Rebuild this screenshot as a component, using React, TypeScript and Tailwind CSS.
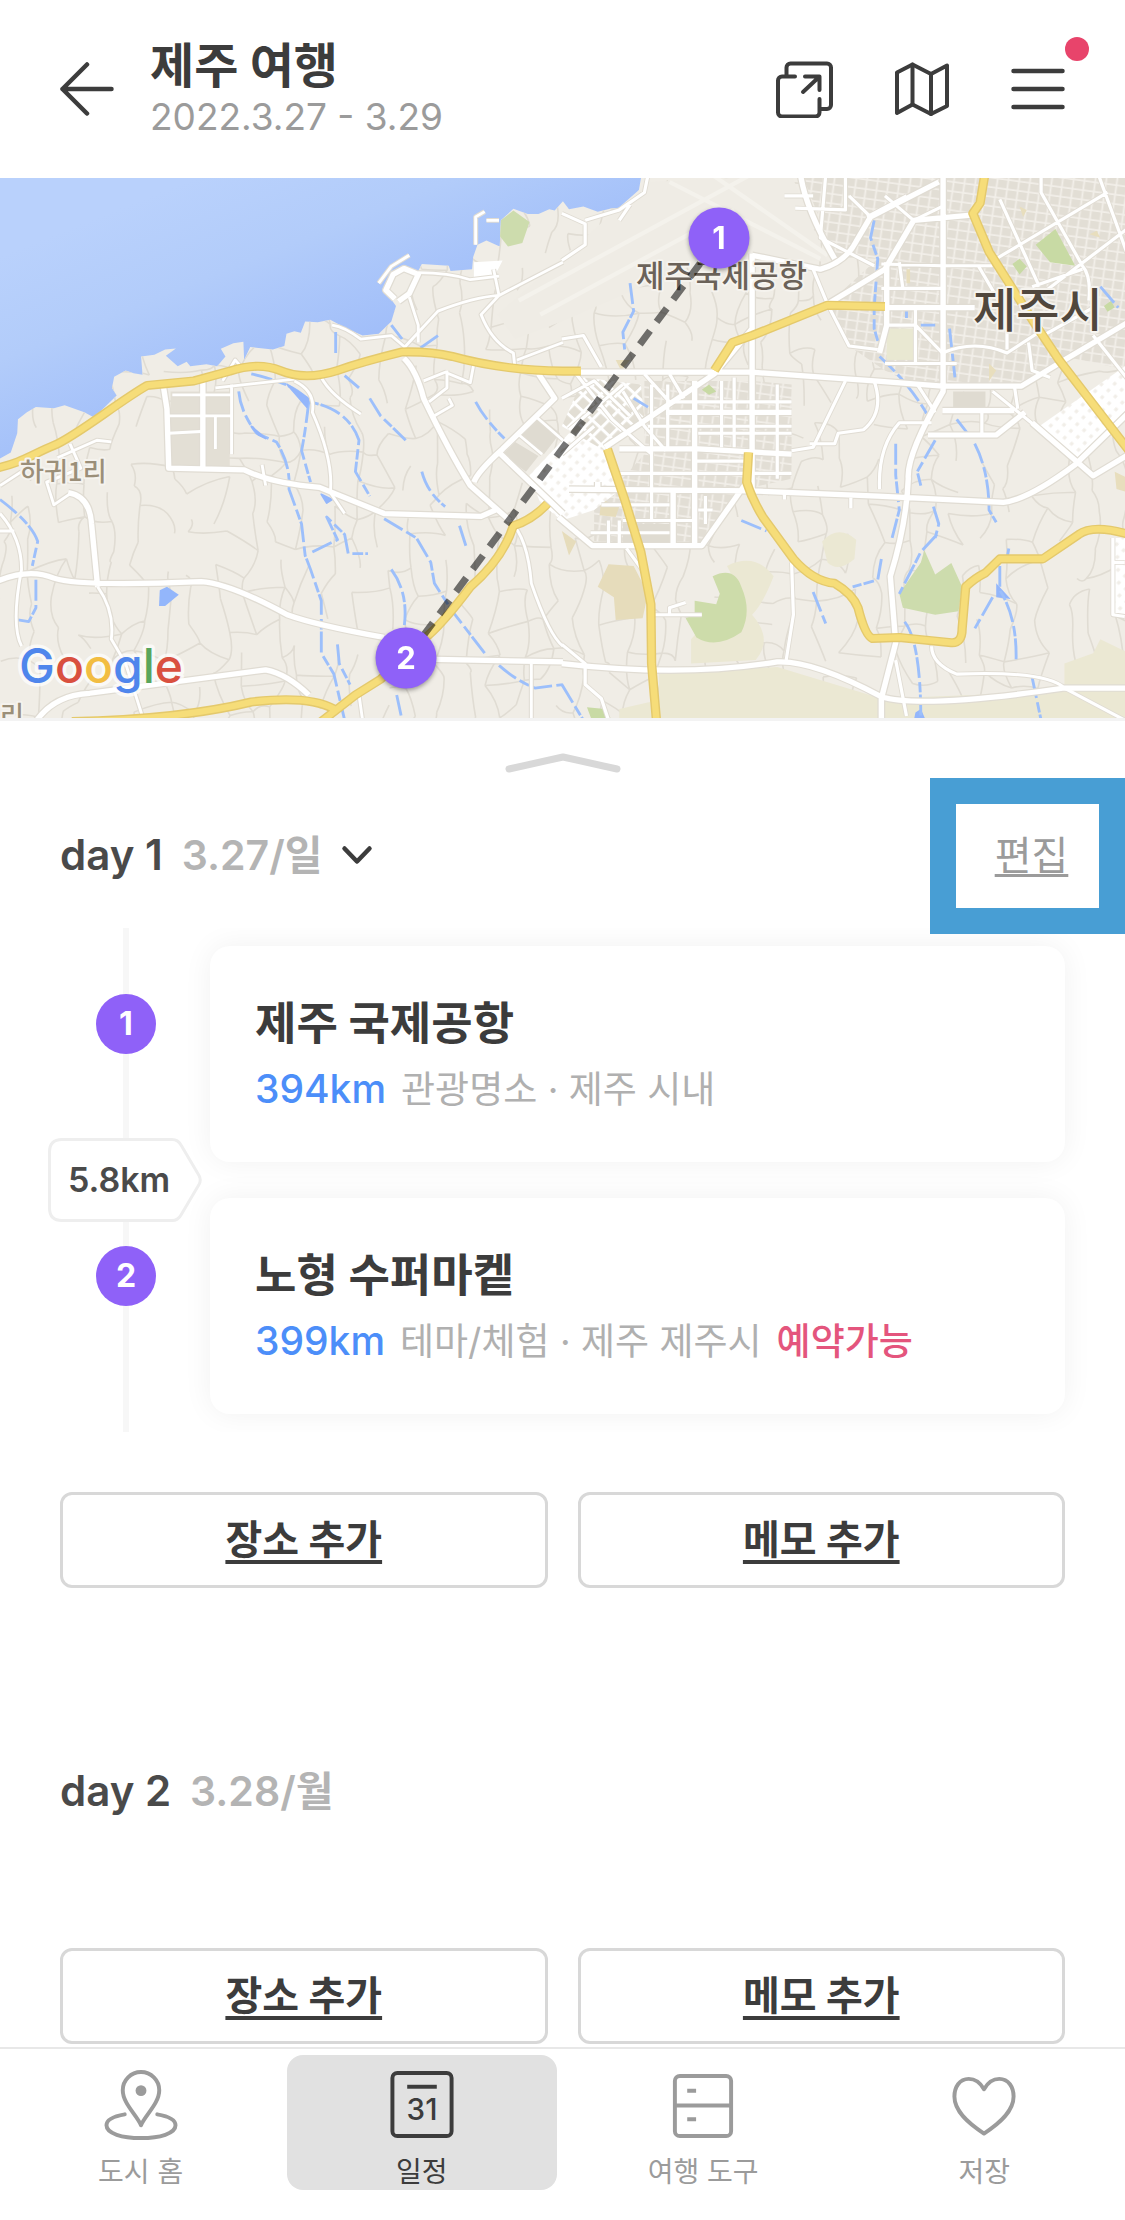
import type { ReactNode } from 'react';

/* ---------- Map drawing ---------- */

// Small deterministic generator so the country lanes are the same on every render.
function createRandom(seed: number) {
  let s = seed;
  return () => {
    s = (s * 16807) % 2147483647;
    return s / 2147483647;
  };
}

// Builds the mesh of thin lanes that covers the land.
function buildLanes() {
  const rnd = createRandom(77);
  const cols = 44;
  const rows = 22;
  const pts: { x: number; y: number }[][] = [];
  for (let r = 0; r < rows; r++) {
    const row: { x: number; y: number }[] = [];
    for (let c = 0; c < cols; c++) {
      row.push({ x: c * 76 - 20 + rnd() * 56, y: r * 80 - 20 + rnd() * 60 });
    }
    pts.push(row);
  }
  const bend = (a: { x: number; y: number }, b: { x: number; y: number }) => {
    const mx = (a.x + b.x) / 2 + (rnd() - 0.5) * 36;
    const my = (a.y + b.y) / 2 + (rnd() - 0.5) * 36;
    return `M${a.x.toFixed(0)} ${a.y.toFixed(0)}Q${mx.toFixed(0)} ${my.toFixed(0)} ${b.x.toFixed(0)} ${b.y.toFixed(0)}`;
  };
  let d = '';
  for (let r = 0; r < rows; r++) {
    for (let c = 0; c < cols; c++) {
      if (c + 1 < cols && rnd() < 0.38) d += bend(pts[r][c], pts[r][c + 1]);
      if (r + 1 < rows && rnd() < 0.74) d += bend(pts[r][c], pts[r + 1][c]);
    }
  }
  return d;
}

const LANES = buildLanes();

const LAND =
  'M0 812L30 795 48 740 50 700 75 680 100 665 150 668 180 660 235 680 262 695 295 662 325 632 312 610 318 578 350 560 372 568 397 572 393 520 430 515 460 500 490 497 462 518 495 548 520 535 530 548 575 542 605 548 628 520 615 498 650 482 678 478 680 530 697 493 760 500 792 490 798 455 820 448 838 452 850 420 885 422 920 415 965 440 1010 460 1055 455 1090 420 1103 375 1075 335 1090 285 1120 262 1165 275 1175 255 1250 260 1255 275 1315 270 1318 235 1330 200 1355 188 1392 205 1395 130 1430 97 1470 112 1500 112 1530 98 1545 102 1568 75 1585 98 1625 90 1665 105 1705 95 1740 95 1775 70 1787 0H3200V1640H0Z';

const YELLOW_LEFT =
  'M-10 840C60 825 90 800 150 775S330 650 410 603L540 590 640 562Q720 535 780 560Q850 590 940 560Q1010 535 1120 507Q1200 505 1260 520Q1400 560 1568 562H1618M1525 942Q1480 990 1430 1005Q1400 1100 1310 1180Q1230 1290 1180 1330L1060 1445 990 1490 890 1570M930 1530Q860 1490 700 1510Q500 1560 200 1566';
const YELLOW_RIGHT =
  'M425 560L475 480 530 460 740 373 900 377M1178 0L1165 80 1145 110 1190 220 1320 430 1385 530 1460 630 1580 790M127 785L175 930 220 1080 248 1230 250 1400 265 1580M520 795L515 880Q530 930 560 980L645 1100Q700 1165 760 1170Q810 1200 825 1240Q845 1320 865 1328L940 1325 1085 1340Q1115 1342 1115 1300L1125 1180Q1150 1155 1180 1140L1220 1100 1340 1100 1440 1030Q1480 1000 1580 1030';

const WHITE_LEFT =
  'M455 605L465 670 470 840 680 845Q760 885 890 895L1070 970 1340 978 1380 960M565 590V840M-10 1165Q80 1125 150 1155Q220 1180 560 1165Q640 1170 800 1260Q880 1290 1070 1325M190 910Q250 920 255 1000L272 1180M100 1566Q150 1490 250 1485L740 1418Q800 1430 860 1490M1215 1388L1568 1395M1125 525Q1160 560 1180 640Q1250 790 1310 890L1420 990M1320 880Q1330 850 1400 785L1545 640 1500 570M1390 795L1568 970M1100 355L1075 330 1095 285 1125 268 1165 285 1140 340 1110 362';
const WHITE_RIGHT =
  'M40 565L530 565 870 590 1060 605 1280 605 1400 530 1580 420M530 225V900M120 780L425 570 530 440M20 900L530 905 880 920 1230 938Q1300 930 1430 830L1580 680M1310 710L1480 862 1580 800M-10 980L85 1062 390 1062 515 880M1062 0V620Q960 800 965 870Q960 1000 915 1150L930 1340 890 1500V1570M665 0Q680 100 760 240M530 230L720 270Q790 250 820 190L860 120 1050 20M740 370L900 270 980 130 1140 115M905 250V430L885 510M900 380H1150M0 1400Q340 1440 600 1395Q700 1390 890 1495Q1000 1530 1400 1470L1580 1470M290 680H640M160 785H380L640 800M100 900L100 880M1060 675H1260M1020 745H1210L1290 680M310 900V1060M370 590V1060';

const MINOR_LEFT =
  'M645 600V800M470 690H645M470 740L560 735M480 630H645M600 690V785M195 770L225 840 130 880 150 945 200 910M160 810L270 760 310 765M272 1180Q320 1250 310 1330L350 1400 400 1562M820 590Q880 620 870 680Q930 820 920 910L960 970M895 580Q920 630 1005 685M0 970Q60 1040 60 1130Q30 1290 60 1350M1480 1400V1562M1000 1490L1010 1562M1420 990Q1470 1040 1480 1170Q1530 1320 1568 1350M1130 490L1220 390Q1320 350 1390 345L1568 250M1375 270L1390 345 1340 400Q1370 480 1430 510L1435 560M1440 530L1568 480M925 430Q960 435 1005 470L1090 460 1130 495M1140 350L1165 430V480M1165 280Q1250 280 1310 300L1390 290M1180 590L1240 565 1310 595 1320 540M1195 650L1245 610V560M1210 690L1260 660 1250 640M620 590L655 530 680 560M600 610L820 585M730 830L740 890M0 890L60 850M1325 200V120L1350 105M1355 130H1390M1055 310L1090 262 1140 230M1440 740L1510 800M1490 690L1568 760M0 1020H40';
const MINOR_RIGHT =
  'M250 600V990M295 600V780M445 590V780M480 580V780M600 600V870M170 990H370M240 720H640M300 650H640M380 740H640M150 855H640M110 945H300M130 990V1060M160 990V1060M80 1025H300M380 960H420M400 920V1000M370 820H520M0 470L60 460 110 550M0 640L90 590 190 690M40 570L140 700 250 800M20 730L170 600M0 800L90 720M170 620L230 720 290 790M230 570L300 650M300 570L340 640M700 270L740 370 800 490 880 500M900 430H985L1060 510M985 380V540M900 540H1100M1060 510Q1150 470 1240 510L1330 450M1240 500V400L1160 260M1300 480L1310 560 1360 580M1060 260H1200M1060 260L890 255M890 325H1060M940 250L950 325M1310 320L1450 270M1210 240L1520 50M1335 0V50L1450 260Q1475 290 1468 360M1495 0L1580 240M1220 70L1330 320M1350 330L1580 150M1340 460L1480 380M1480 460L1580 590M700 60H620M735 0L720 180 870 260M790 0V100L650 95M860 120L800 60M900 60L980 130 1060 90M850 120L960 60M790 590L700 780 640 790M870 590Q900 680 840 730L770 740 760 770 690 770M990 600L1040 680M1200 620L1320 720M1260 600L1270 670M1170 680V745M1030 710H940Q880 780 885 900M640 1110L645 1260 625 1390M620 905V930M805 925V955M180 1070L230 1140M250 1260H390M300 1260V1240L345 1225M0 1345L65 1400V1460L110 1500 130 1562M930 1390L960 1550M1030 1350Q1030 1400 1100 1430Q1350 1420 1400 1470L1568 1562M1535 1040V1260L1568 1265M1535 1110H1568M0 245L65 200V140L0 110M65 130L160 100 230 50 240 0M160 130L190 85';

const RIVER_LEFT =
  'M665 620Q670 680 715 740L770 765Q810 830 805 900L840 1000 850 1090 865 1130 895 1220V1370L930 1430 960 1562M860 650Q850 740 840 790L865 880M700 570Q830 600 860 650Q970 670 1000 760L990 850 1030 920M1070 985L1160 1040 1200 1110 1210 1170 1260 1250 1350 1370M1090 1130Q1140 1200 1125 1300M870 1080L940 1045 910 980 960 1030 970 1085H1025M940 1345L945 1400 975 1460M0 930Q90 1000 105 1050L90 1120M100 1160V1240L80 1280 50 1275M1175 850Q1190 910 1240 950M1325 650Q1350 700 1405 755M1280 1005L1300 1070M935 450V520M1090 430L1120 470M1220 460L1165 500M1390 1405Q1440 1450 1490 1470L1568 1460M960 575L1000 610M1030 640L1060 690 1130 760M1105 1490L1120 1562';
const RIVER_RIGHT =
  'M190 310L200 390 170 450 175 500M870 130L860 180 880 240 870 380V440L880 475M885 520Q970 600 1020 690M1040 760L990 850 1000 890M930 770L930 860 940 960 920 1040M1045 1030L1000 1080 940 1200M1150 770Q1190 850 1190 960L1210 995M1035 950L1050 1000 1040 1040M890 1100L880 1160 810 1180M1080 440L1095 580M700 1195L735 1285M1220 1120V1190Q1270 1270 1265 1400M955 1280Q1000 1340 1000 1562M500 990L570 1020M1200 1210L1150 1300M1310 1440L1335 1562M0 1460L60 1562M1500 320L1550 380M200 640L240 665M1100 700L1130 740M1245 1070L1240 1100M960 390V410M1000 430H1040';

function JejuMap() {
  return (
    <svg
      viewBox="0 0 1125 540"
      preserveAspectRatio="xMidYMid slice"
      className="block w-full"
      role="img"
      aria-label="제주 지도"
    >
      <defs>
        <linearGradient id="sea" gradientUnits="userSpaceOnUse" x1="170" y1="10" x2="250" y2="210">
          <stop offset="0" stopColor="#b9d1fc" />
          <stop offset="0.45" stopColor="#b2ccfa" />
          <stop offset="1" stopColor="#a1bef9" />
        </linearGradient>
        <pattern id="blocks" width="30" height="27" patternUnits="userSpaceOnUse" patternTransform="rotate(8)">
          <rect width="30" height="27" fill="#e2ded5" />
          <path d="M0 3H30M4 0V27" stroke="#f2efe9" strokeWidth="5" />
        </pattern>
        <pattern id="dense" width="26" height="26" patternUnits="userSpaceOnUse" patternTransform="rotate(42)">
          <rect width="26" height="26" fill="#ffffff" />
          <rect x="6" y="7" width="9" height="10" fill="#f1eee8" />
        </pattern>
        <pattern id="diag" width="34" height="34" patternUnits="userSpaceOnUse" patternTransform="rotate(44)">
          <rect width="34" height="34" fill="#e2ded4" />
          <path d="M0 4H34M4 0V34" stroke="#ffffff" strokeWidth="9" />
        </pattern>
        <clipPath id="land">
          <path d={LAND} />
        </clipPath>
      </defs>
      <rect width="1125" height="540" fill="url(#sea)" />
      <g transform="translate(0 -3) scale(0.359 0.349)" fill="none" strokeLinejoin="round">
        <path d={LAND} fill="#f0ede6" />
        <g clipPath="url(#land)">
          <path d={LANES} stroke="#e0dcd3" strokeWidth="4.5" />
          <path d="M1395 130L1430 102 1475 135 1455 195 1415 205 1392 175Z" fill="#cddcad" />
          <path d="M1445 745L1500 690 1560 740 1515 800ZM1400 800L1435 765 1500 805 1465 850Z" fill="#dfdbd1" />
          <path d="M475 620H640V835H475Z" fill="#e3dfd5" />
          <path d="M445 1190L465 1180 498 1203 460 1235H443Z" fill="#93b6fb" />
        </g>
        <g transform="translate(1565 0)">
          {/* airport field */}
          <path d="M-180 400L240 20 640 0 740 250 530 225 390 245 0 420 -130 470Z" fill="#efece5" />
          <path d="M-120 360L560 -20M-60 400L480 100M300 20L720 240M420 0L740 230" stroke="#f4f2ec" strokeWidth="12" />
          {/* built-up blocks */}
          <path d="M670 0H1580V560L1400 520 1280 600H1060L980 600 900 560 800 490 740 370 880 240 760 235Z" fill="url(#blocks)" />
          <path d="M230 590H530L640 600V870L510 900 390 1050H90V960L230 800Z" fill="url(#blocks)" />
          <path d="M905 440H980V530H905Z" fill="#e9e8d2" />
          <path d="M1090 620H1180V665H1090ZM170 1000H300V1055H170Z" fill="#dfdbd1" />
          {/* fields and parks */}
          <path d="M725 1050Q770 1000 820 1045L815 1100Q770 1140 740 1110ZM460 1120Q540 1080 590 1150 560 1230 530 1260 590 1330 540 1390L360 1400V1330L490 1180Z" fill="#ebe8d3" />
          <path d="M270 1430L600 1410 890 1500 1400 1480 1400 1400 1480 1370 1500 1330 1580 1370V1580H270ZM160 1530L245 1510 260 1580H160Z" fill="#ebe8d3" />
          <path d="M130 1115L200 1120 240 1200 225 1270 150 1275 145 1210 100 1180ZM110 930L160 950 150 980 105 975ZM0 1020L40 1050 20 1090Z" fill="#e6dcbb" />
          <path d="M420 1150Q480 1120 500 1180 530 1250 500 1310 430 1360 375 1325L345 1270 370 1260V1220L430 1230 440 1200Z" fill="#cddcaa" />
          <path d="M1010 1075L1040 1145 1085 1112 1115 1180 1105 1250 1040 1260 950 1240 940 1200 1000 1110Z" fill="#cddcad" />
          <path d="M1320 200L1375 155 1430 260 1360 250ZM1255 255L1275 240 1295 262 1275 285ZM1510 375L1530 360 1540 380 1520 392ZM390 615L410 600 430 620 410 630ZM70 1525L120 1530 150 1580H90Z" fill="#c8daa4" />
          <path d="M150 530L190 530 165 560ZM190 660L230 690 210 640ZM1275 90L1295 100 1285 120ZM1190 540L1210 560 1190 590ZM1490 160L1500 180 1470 170ZM970 270V310H960V270ZM1540 850L1580 870V910L1545 900Z" fill="#e8debd" />
          {/* dense white quarters */}
          <path d="M-90 860L20 740 110 760 165 900 90 960 0 990 -60 940Z" fill="url(#dense)" />
          <path d="M1330 720L1580 540V690L1430 825Z" fill="url(#dense)" />
          <path d="M60 580L220 600 230 700 120 790 0 720Z" fill="url(#diag)" />
          <path d="M1540 1040H1580V1260H1540Z" fill="url(#dense)" />
          <path d="M1210 1170L1250 1215 1210 1210ZM985 1540L1000 1530 1015 1565H980Z" fill="#93b6fb" />
        </g>
        <g stroke="#9cbffb" strokeWidth="8" strokeDasharray="60 12 30 6">
          <path d={RIVER_LEFT} />
          <path d={RIVER_RIGHT} transform="translate(1565 0)" />
        </g>
        <path d="M700 720L740 755 720 745ZM800 600L860 640 855 665ZM895 915L925 930 910 940Z" fill="#93b6fb" stroke="#93b6fb" strokeWidth="5" />
        <path d="M1320 250L1400 245 1380 285 1390 300 1320 292Z" fill="#ffffff" />
        <g stroke="#e0dcd3">
          <path d={MINOR_LEFT} strokeWidth="14" />
          <path d={MINOR_RIGHT} strokeWidth="14" transform="translate(1565 0)" />
          <path d={WHITE_LEFT} strokeWidth="22" />
          <path d={WHITE_RIGHT} strokeWidth="22" transform="translate(1565 0)" />
        </g>
        <g stroke="#ffffff">
          <path d={MINOR_LEFT} strokeWidth="8" />
          <path d={MINOR_RIGHT} strokeWidth="9" transform="translate(1565 0)" />
          <path d={WHITE_LEFT} strokeWidth="15" />
          <path d={WHITE_RIGHT} strokeWidth="15" transform="translate(1565 0)" />
        </g>
        <g stroke="#e4c96c" strokeWidth="26">
          <path d={YELLOW_LEFT} />
          <path d={YELLOW_RIGHT} transform="translate(1565 0)" />
        </g>
        <g stroke="#f6dd79" strokeWidth="18">
          <path d={YELLOW_LEFT} />
          <path d={YELLOW_RIGHT} transform="translate(1565 0)" />
        </g>
      </g>

      <g className="font-['Noto_Sans_CJK_KR',sans-serif]" stroke="#f5f3ee" strokeWidth="4" paintOrder="stroke" strokeLinejoin="round">
        <text x="636" y="109" fontSize="31" fontWeight="500" fill="#6b6259">제주국제공항</text>
        <text x="973" y="149" fontSize="47" fontWeight="500" fill="#50473d">제주시</text>
        <text x="20" y="303" fontSize="26" fontWeight="500" fill="#9b8f79">하귀1리</text>
        <text x="0" y="547" fontSize="26" fontWeight="500" fill="#9b8f79">리</text>
      </g>

      <line x1="406" y1="481" x2="719" y2="60" stroke="#000000" strokeOpacity="0.54" strokeWidth="7" strokeDasharray="17 11" />

      <text
        x="19"
        y="505"
        fontSize="48"
        fontWeight="500"
        stroke="#ffffff"
        strokeOpacity="0.7"
        strokeWidth="7"
        strokeLinejoin="round"
        paintOrder="stroke"
        className="font-['Inter',sans-serif]"
      >
        <tspan fill="#4f86ec">G</tspan>
        <tspan fill="#d9503f">o</tspan>
        <tspan fill="#f2bd42">o</tspan>
        <tspan fill="#4f86ec">g</tspan>
        <tspan fill="#58a55c">l</tspan>
        <tspan fill="#d9503f">e</tspan>
      </text>

      <MapPin x={719} y={60} label="1" />
      <MapPin x={406} y={480} label="2" />
    </svg>
  );
}

function MapPin({ x, y, label }: { x: number; y: number; label: string }) {
  return (
    <g className="drop-shadow-[0_2px_2px_rgba(0,0,0,0.35)]">
      <circle cx={x} cy={y} r="30.500" fill="#8f61f8" />
      <text
        x={x}
        y={y + 11}
        textAnchor="middle"
        fontSize="31"
        fontWeight="700"
        fill="#ffffff"
        className="font-['Inter',sans-serif]"
      >
        {label}
      </text>
    </g>
  );
}

/* ---------- Header ---------- */

function Header() {
  return (
    <header className="flex h-[178px] items-center justify-between px-[60px]">
      <div className="flex items-center gap-[36px]">
        <button type="button" aria-label="뒤로" className="block">
          <svg width="54" height="54" viewBox="0 0 54 54" fill="none" stroke="#3c3c3c" strokeWidth="4.5" strokeLinecap="round" strokeLinejoin="round">
            <path d="M27 2.5L2.5 27 27 51.5M2.5 27H51.5" />
          </svg>
        </button>
        <div className="flex flex-col pb-1">
          <h1 className="text-[48px] leading-[60px] font-bold text-[#3c3c3c]">제주 여행</h1>
          <p className="text-[37px] leading-[42px] text-[#9b9b9b]">2022.3.27 - 3.29</p>
        </div>
      </div>
      <div className="flex items-center gap-[61px]">
        <button type="button" aria-label="공유">
          <svg width="58" height="58" viewBox="0 0 58 58" fill="none" stroke="#3c3c3c" strokeWidth="4" strokeLinecap="round" strokeLinejoin="round">
            <path d="M20 16.500H7a4 4 0 0 0-4 4v32a4 4 0 0 0 4 4h33.500a4 4 0 0 0 4-4V39" />
            <path d="M11.500 15V7.500a4 4 0 0 1 4-4h36.500a4 4 0 0 1 4 4v37.500a4 4 0 0 1-4 4h-6.500" />
            <path d="M30 16.500h14.500V30M43.500 17.500L28 32" />
          </svg>
        </button>
        <button type="button" aria-label="지도">
          <svg width="56" height="56" viewBox="0 0 56 56" fill="none" stroke="#3c3c3c" strokeWidth="4" strokeLinejoin="round" strokeLinecap="round">
            <path d="M3 11.500L18.500 3.500 37 13 53 4.500V45L37 53 18.500 43.500 3 52Z" />
            <path d="M18.500 3.500V43.500M37 13V53" />
          </svg>
        </button>
        <button type="button" aria-label="메뉴" className="relative">
          <svg width="54" height="56" viewBox="0 0 54 56" fill="none" stroke="#3c3c3c" strokeWidth="4.500" strokeLinecap="round">
            <path d="M2.500 10H51.500M2.500 28H51.500M2.500 46H51.500" />
          </svg>
          <span className="absolute -top-6 -right-6 size-6 rounded-full bg-[#e8446b]" />
        </button>
      </div>
    </header>
  );
}

/* ---------- Itinerary ---------- */

function DayTitle({ day, date, children }: { day: string; date: string; children?: ReactNode }) {
  return (
    <div className="flex h-[150px] items-center gap-[19px] pt-1 pl-[60px] leading-[48px] font-semibold">
      <h2 className="text-[42px] text-[#4a4a4a]">{day}</h2>
      <span className="text-[41px] text-[#b4b4b4]">{date}</span>
      {children}
    </div>
  );
}

function AddButtons() {
  const base =
    'h-24 flex-1 rounded-xl border-3 border-[#d8d8d8] bg-white text-[40px] font-bold text-[#3c3c3c] underline decoration-4 underline-offset-6';
  return (
    <div className="flex gap-[30px] px-[60px]">
      <button type="button" className={base}>장소 추가</button>
      <button type="button" className={base}>메모 추가</button>
    </div>
  );
}

type Place = { no: number; name: string; distance: string; info: string; bookable?: boolean; next?: string };

const PLACES: Place[] = [
  { no: 1, name: '제주 국제공항', distance: '394km', info: '관광명소 · 제주 시내', next: '5.8km' },
  { no: 2, name: '노형 수퍼마켙', distance: '399km', info: '테마/체험 · 제주 제주시', bookable: true },
];

function DistanceTag({ text }: { text: string }) {
  return (
    <div className="absolute -bottom-[42px] -left-3 z-10 flex h-[84px] w-[154px] items-center pl-5">
      <svg className="absolute inset-0" width="154" height="84" viewBox="0 0 154 84" fill="#ffffff" stroke="#eeeeee" strokeWidth="3">
        <path d="M14 1.500H124Q130 1.500 133 7L151 37.500Q153.500 42 151 46.500L133 77Q130 82.500 124 82.500H14Q1.500 82.500 1.500 70V14Q1.500 1.500 14 1.500Z" />
      </svg>
      <span className="relative text-[34px] leading-10 font-semibold text-[#4a4a4a]">{text}</span>
    </div>
  );
}

function PlaceRow({ place }: { place: Place }) {
  return (
    <li className={place.next ? 'relative z-10 flex px-[60px]' : 'relative flex px-[60px]'}>
      <div className="relative mr-[18px] flex w-[132px] shrink-0 justify-center">
        <span className="w-1.5 bg-[#f7f7f7]" />
        <span className="absolute top-[66px] flex size-[60px] items-center justify-center rounded-full bg-[#8f61f8] text-[32px] font-bold text-white">
          {place.no}
        </span>
        {place.next && <DistanceTag text={place.next} />}
      </div>
      <article className="my-[18px] flex min-w-0 flex-1 flex-col gap-1 rounded-[20px] bg-white px-[45px] pt-12 pb-[42px] shadow-[0_0_30px_rgba(0,0,0,0.06)]">
        <h3 className="text-[45px] leading-[60px] font-bold text-[#3c3c3c]">{place.name}</h3>
        <p className="flex h-[62px] items-baseline gap-[15px] leading-[62px]">
          <span className="text-[39px] font-medium text-[#4c8ef9]">{place.distance}</span>
          <span className="text-[37px] text-[#b0b0b0]">{place.info}</span>
          {place.bookable && <span className="text-[37px] font-medium text-[#e4557d]">예약가능</span>}
        </p>
      </article>
    </li>
  );
}

/* ---------- Bottom navigation ---------- */

const PinIcon = (
  <svg width="76" height="72" viewBox="0 0 76 72" fill="none" stroke="currentColor" strokeWidth="4" strokeLinecap="round" strokeLinejoin="round">
    <path d="M38 57C34 47 19.500 35 19.500 21.500a18.500 18.500 0 0 1 37 0C56.500 35 42 47 38 57Z" />
    <circle cx="38" cy="22" r="5.500" fill="currentColor" stroke="none" />
    <path d="M21.500 46C10 48 3 52 3 57c0 8.500 16 13 35 13S73 65.500 73 57c0-5-7-9-18.500-11" />
  </svg>
);

const CalendarIcon = (
  <svg width="64" height="72" viewBox="0 0 64 72" fill="none" stroke="currentColor" strokeWidth="4">
    <rect x="2" y="4" width="60" height="64" rx="5" />
    <path d="M17 18H47" />
    <text x="32" y="52" textAnchor="middle" fontSize="30" fontWeight="500" fill="currentColor" stroke="none" className="font-['Inter',sans-serif]">
      31
    </text>
  </svg>
);

const DrawerIcon = (
  <svg width="62" height="72" viewBox="0 0 62 72" fill="none" stroke="currentColor" strokeWidth="4">
    <rect x="2.500" y="7" width="57" height="61" rx="5" />
    <path d="M3 37H59M15 22H24M15 51H24" />
  </svg>
);

const HeartIcon = (
  <svg width="66" height="72" viewBox="0 0 66 72" fill="none" stroke="currentColor" strokeWidth="4" strokeLinejoin="round">
    <path d="M33 20.500C29 13.500 23 10 17.500 10 8 10 3 18.500 3 28c0 15 14 27 30 37.500 16-10.500 30-22.500 30-37.500C63 18.500 58 10 48.500 10 43 10 37 13.500 33 20.500Z" />
  </svg>
);

const TABS = [
  { label: '도시 홈', icon: PinIcon, active: false },
  { label: '일정', icon: CalendarIcon, active: true },
  { label: '여행 도구', icon: DrawerIcon, active: false },
  { label: '저장', icon: HeartIcon, active: false },
];

function BottomNav() {
  return (
    <nav className="sticky bottom-0 z-20 mt-[3px] flex border-t-2 border-[#e8e8e8] bg-white pt-1.5 pb-[30px]">
      {TABS.map((tab) => (
        <a
          key={tab.label}
          href="#"
          aria-current={tab.active ? 'page' : undefined}
          className={
            tab.active
              ? 'mx-1.5 flex h-[135px] flex-1 flex-col items-center rounded-2xl bg-[#e1e1e1] pt-3.5 text-[28px] leading-9 text-[#3c3c3c]'
              : 'mx-1.5 flex h-[135px] flex-1 flex-col items-center rounded-2xl pt-3.5 text-[28px] leading-9 text-[#9b9b9b]'
          }
        >
          {tab.icon}
          <span className="mt-3.5">{tab.label}</span>
        </a>
      ))}
    </nav>
  );
}

export default function App() {
  return (
    <div className="min-h-screen bg-white font-['Inter','Noto_Sans_CJK_KR',sans-serif]">
      <Header />
      <div className="border-b-3 border-[#f3f3f3]">
        <JejuMap />
      </div>
      <main>
        <button type="button" aria-label="지도 접기" className="mx-auto flex h-[57px] w-[120px] items-end justify-center pb-1">
          <svg width="116" height="22" viewBox="0 0 116 22" fill="none" stroke="#d8d8d8" strokeWidth="7" strokeLinecap="round" strokeLinejoin="round">
            <path d="M4 17L58 5 112 17" />
          </svg>
        </button>

        <section>
          <div className="relative z-20 flex items-start justify-between">
            <DayTitle day="day 1" date="3.27/일">
              <button type="button" aria-label="날짜 선택">
                <svg width="32" height="20" viewBox="0 0 32 20" fill="none" stroke="#3c3c3c" strokeWidth="4.500" strokeLinecap="round" strokeLinejoin="round">
                  <path d="M3.500 3.500L16 16.500 28.500 3.500" />
                </svg>
              </button>
            </DayTitle>
            <button
              type="button"
              className="-mb-1.5 h-[156px] w-[195px] border-26 border-[#489ed4] bg-white pl-2 text-[40px] leading-[48px] text-[#9b9b9b] underline decoration-3 underline-offset-4"
            >
              편집
            </button>
          </div>
          <ul className="mb-[60px] overflow-hidden">
            {PLACES.map((place) => (
              <PlaceRow key={place.no} place={place} />
            ))}
          </ul>
          <AddButtons />
        </section>

        <section className="mt-[126px]">
          <div className="mb-[84px]">
            <DayTitle day="day 2" date="3.28/월" />
          </div>
          <AddButtons />
        </section>
      </main>
      <BottomNav />
    </div>
  );
}
